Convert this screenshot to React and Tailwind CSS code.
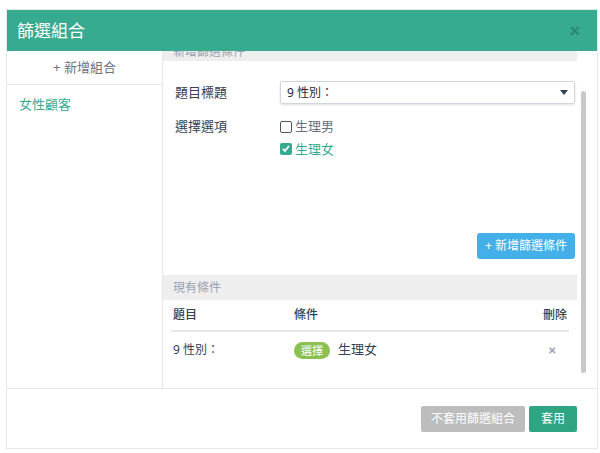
export default function App() {
  return (
    <div className="w-[600px] h-[453px] bg-white relative" style={{ fontFamily: '"Noto Sans", "Noto Sans CJK TC", sans-serif' }}>
      <div className="absolute left-[6px] top-[9px] w-[592px] h-[440px] border border-gray-200 flex flex-col bg-white">
        <div className="h-[41px] bg-[#37ab8f] flex items-center justify-between px-[10px] shrink-0">
          <span className="text-white text-[17px]">篩選組合</span>
          <span className="text-[#2a8670] text-[14px] font-bold mr-[6px]">✕</span>
        </div>
        <div className="flex h-[338px] border-b border-gray-200">
          <div className="w-[156px] border-r border-gray-200 shrink-0">
            <div className="h-[34px] border-b border-gray-200 flex items-center justify-center text-[13px] text-gray-500">+ 新增組合</div>
            <div className="px-[12px] pt-[10px] text-[13px] text-[#37ab8f]">女性顧客</div>
          </div>
          <div className="flex-1 flex overflow-hidden">
            <div className="flex-1 flex flex-col">
              <div className="h-[10px] bg-[#eeeeef] text-[12px] text-gray-400 leading-[2px] px-[10px] overflow-hidden">新增篩選條件</div>
              <div className="h-[214px] relative">
                <div className="flex items-center pl-[12px] pt-[20px]">
                  <span className="w-[105px] text-[13px] text-gray-700">題目標題</span>
                  <div className="flex-1 mr-[2px] h-[23px] border border-gray-300 rounded-[2px] flex items-center justify-between px-[6px] text-[12px] text-gray-800 shadow-sm">
                    <span>9 性別：</span>
                    <span className="w-0 h-0 border-l-[4px] border-r-[4px] border-t-[5px] border-l-transparent border-r-transparent border-t-gray-700"></span>
                  </div>
                </div>
                <div className="flex pl-[12px] pt-[13px]">
                  <span className="w-[105px] text-[13px] text-gray-700">選擇選項</span>
                  <div className="flex flex-col gap-[3px] text-[13px]">
                    <div className="flex items-center gap-[3px] text-gray-500"><span className="w-[12px] h-[12px] border border-gray-600 rounded-[2px]"></span>生理男</div>
                    <div className="flex items-center gap-[3px] text-[#37ab8f]"><span className="w-[12px] h-[12px] bg-[#37ab8f] rounded-[2px] flex items-center justify-center"><svg width="10" height="10" viewBox="0 0 10 10"><path d="M2 5l2 2 4-5" stroke="white" strokeWidth="1.8" fill="none" /></svg></span>生理女</div>
                  </div>
                </div>
                <button className="absolute right-[2px] bottom-[16px] h-[26px] px-[8px] bg-[#43b0ea] text-white text-[12px] rounded-[3px]">+ 新增篩選條件</button>
              </div>
              <div className="h-[25px] bg-[#eeeeef] text-[12px] text-gray-400 flex items-center px-[10px]">現有條件</div>
              <div className="flex items-center h-[32px] mx-[8px] border-b-2 border-gray-200 text-[12px] text-gray-700 font-medium">
                <span className="w-[123px] pl-[2px]">題目</span>
                <span className="flex-1">條件</span>
                <span className="pr-[2px]">刪除</span>
              </div>
              <div className="flex items-center h-[36px] mx-[8px] text-[12px] text-gray-700">
                <span className="w-[123px] pl-[2px]">9 性別：</span>
                <span className="flex-1 flex items-center gap-[8px]"><span className="bg-[#8cc152] text-white rounded-full px-[7px] text-[11px] leading-[17px]">選擇</span><span className="text-[13px]">生理女</span></span>
                <span className="pr-[13px] text-gray-400 text-[10px] font-bold">✕</span>
              </div>
            </div>
            <div className="w-[20px] shrink-0 flex flex-col">
              <div className="h-[40px]"></div>
              <div className="w-[5px] ml-[4px] h-[282px] bg-[#c8c8c8] rounded-full"></div>
            </div>
          </div>
        </div>
        <div className="flex-1 flex items-center justify-end gap-[4px] pr-[20px]">
          <button className="h-[26px] px-[10px] bg-[#bdbdbd] text-white text-[12px] rounded-[2px]">不套用篩選組合</button>
          <button className="h-[26px] px-[12px] bg-[#2fa584] text-white text-[12px] rounded-[2px]">套用</button>
        </div>
      </div>
    </div>
  );
}
